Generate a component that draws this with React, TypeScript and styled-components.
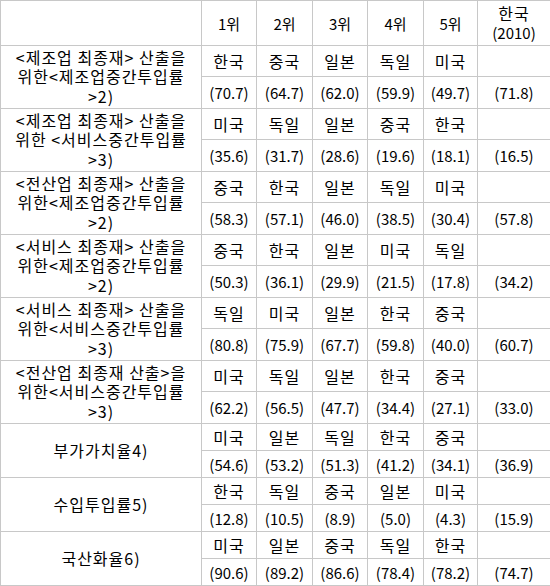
import styled, { createGlobalStyle } from "styled-components";

const GlobalStyle = createGlobalStyle`
  html, body {
    margin: 0;
    padding: 0;
    background: #ffffff;
  }
  body {
    font-family: "Noto Sans CJK KR", "Noto Sans", sans-serif;
    color: #000000;
  }
`;

// start of styled-components

const Table = styled.table`
  width: 550px;
  border-collapse: collapse;
  table-layout: fixed;
  font-size: 15px;
  line-height: 19px;
`;

const HeadRow = styled.tr`
  height: 45px;
`;

const SubRow = styled.tr<{ $h: number }>`
  height: ${(p) => p.$h}px;
`;

const Cell = styled.td`
  border: 1px solid #c8c8c8;
  padding: 0;
  text-align: center;
  vertical-align: middle;
  white-space: nowrap;
`;

const HeadCell = styled(Cell).attrs({ as: "th" })`
  font-weight: 400;
`;

// hangul cells run a bit wider than the digits
const WordCell = styled(Cell)`
  font-size: 16px;
  letter-spacing: 1px;
`;

const LabelCell = styled(WordCell)`
  padding: 0 2px;
  line-height: 19.5px;
`;

const Line = styled.div<{ $wide?: boolean }>`
  white-space: nowrap;
  ${(p) => p.$wide && "font-size: 16px; letter-spacing: 1px;"}
`;

// end of styled-components

type Group = {
  label: string[];
  countries: string[];
  values: string[];
  korea: string;
  tall: boolean;
};

const groups: Group[] = [
  {
    label: ["<제조업 최종재> 산출을", "위한<제조업중간투입률", ">2)"],
    countries: ["한국", "중국", "일본", "독일", "미국"],
    values: ["(70.7)", "(64.7)", "(62.0)", "(59.9)", "(49.7)"],
    korea: "(71.8)",
    tall: true,
  },
  {
    label: ["<제조업 최종재> 산출을", "위한 <서비스중간투입률", ">3)"],
    countries: ["미국", "독일", "일본", "중국", "한국"],
    values: ["(35.6)", "(31.7)", "(28.6)", "(19.6)", "(18.1)"],
    korea: "(16.5)",
    tall: true,
  },
  {
    label: ["<전산업 최종재> 산출을", "위한<제조업중간투입률", ">2)"],
    countries: ["중국", "한국", "일본", "독일", "미국"],
    values: ["(58.3)", "(57.1)", "(46.0)", "(38.5)", "(30.4)"],
    korea: "(57.8)",
    tall: true,
  },
  {
    label: ["<서비스 최종재> 산출을", "위한<제조업중간투입률", ">2)"],
    countries: ["중국", "한국", "일본", "미국", "독일"],
    values: ["(50.3)", "(36.1)", "(29.9)", "(21.5)", "(17.8)"],
    korea: "(34.2)",
    tall: true,
  },
  {
    label: ["<서비스 최종재> 산출을", "위한<서비스중간투입률", ">3)"],
    countries: ["독일", "미국", "일본", "한국", "중국"],
    values: ["(80.8)", "(75.9)", "(67.7)", "(59.8)", "(40.0)"],
    korea: "(60.7)",
    tall: true,
  },
  {
    label: ["<전산업 최종재 산출>을", "위한<서비스중간투입률", ">3)"],
    countries: ["미국", "독일", "일본", "한국", "중국"],
    values: ["(62.2)", "(56.5)", "(47.7)", "(34.4)", "(27.1)"],
    korea: "(33.0)",
    tall: true,
  },
  {
    label: ["부가가치율4)"],
    countries: ["미국", "일본", "독일", "한국", "중국"],
    values: ["(54.6)", "(53.2)", "(51.3)", "(41.2)", "(34.1)"],
    korea: "(36.9)",
    tall: false,
  },
  {
    label: ["수입투입률5)"],
    countries: ["한국", "독일", "중국", "일본", "미국"],
    values: ["(12.8)", "(10.5)", "(8.9)", "(5.0)", "(4.3)"],
    korea: "(15.9)",
    tall: false,
  },
  {
    label: ["국산화율6)"],
    countries: ["미국", "일본", "중국", "독일", "한국"],
    values: ["(90.6)", "(89.2)", "(86.6)", "(78.4)", "(78.2)"],
    korea: "(74.7)",
    tall: false,
  },
];

const colWidths = [201, 55, 56, 55, 56, 54, 73];

function RankTable() {
  return (
    <Table>
      <colgroup>
        {colWidths.map((w, i) => (
          <col key={i} style={{ width: w }} />
        ))}
      </colgroup>
      <thead>
        <HeadRow>
          <HeadCell />
          {["1위", "2위", "3위", "4위", "5위"].map((r) => (
            <HeadCell key={r}>{r}</HeadCell>
          ))}
          <HeadCell>
            <Line $wide>한국</Line>
            <Line>(2010)</Line>
          </HeadCell>
        </HeadRow>
      </thead>
      <tbody>
        {groups.map((g, gi) => [
          <SubRow key={`${gi}a`} $h={g.tall ? 31 : 27}>
            <LabelCell rowSpan={2}>
              {g.label.map((l) => (
                <Line key={l}>{l}</Line>
              ))}
            </LabelCell>
            {g.countries.map((c, i) => (
              <WordCell key={i}>{c}</WordCell>
            ))}
            <Cell />
          </SubRow>,
          <SubRow key={`${gi}b`} $h={g.tall ? 32 : 27}>
            {g.values.map((v, i) => (
              <Cell key={i}>{v}</Cell>
            ))}
            <Cell>{g.korea}</Cell>
          </SubRow>,
        ])}
      </tbody>
    </Table>
  );
}

export default function App() {
  return (
    <>
      <GlobalStyle />
      <RankTable />
    </>
  );
}
